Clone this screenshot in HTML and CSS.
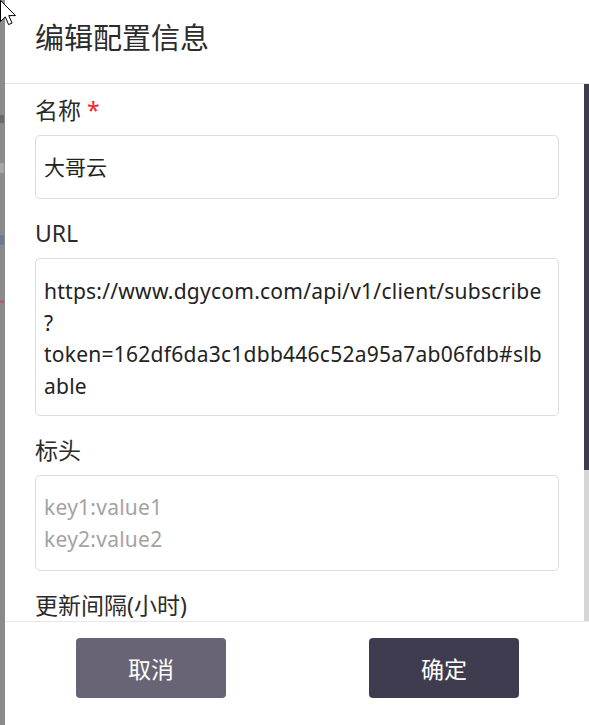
FILE: index.html
```html
<!DOCTYPE html>
<html lang="zh-CN">
<head>
<meta charset="utf-8">
<title>编辑配置信息</title>
<link rel="stylesheet" href="styles.css">
</head>
<body>
<div class="backdrop">
  <span class="bg-mark m1"></span>
  <span class="bg-mark m2"></span>
  <span class="bg-mark m3"></span>
  <span class="bg-mark m4"></span>
</div>
<div class="modal">
  <header class="modal-header">
    <h1 class="modal-title">编辑配置信息</h1>
  </header>
  <div class="modal-body">
    <div class="form">
      <div class="field">
        <label class="field-label">名称 <span class="required">*</span></label>
        <div class="input">大哥云</div>
      </div>
      <div class="field">
        <label class="field-label">URL</label>
        <div class="textarea url">https://www.dgycom.com/api/v1/client/subscribe<br>?<br>token=162df6da3c1dbb446c52a95a7ab06fdb#slb<br>able</div>
      </div>
      <div class="field">
        <label class="field-label">标头</label>
        <div class="textarea headers placeholder">key1:value1<br>key2:value2</div>
      </div>
      <div class="field">
        <label class="field-label">更新间隔(小时)</label>
      </div>
    </div>
    <div class="scrollbar"><div class="thumb"></div></div>
  </div>
  <footer class="modal-footer">
    <button class="btn btn-cancel">取消</button>
    <button class="btn btn-ok">确定</button>
  </footer>
</div>
<svg class="cursor" width="20" height="28" viewBox="0 0 20 28">
  <path d="M0.5 0.5 L0.5 21.5 L5.3 16.9 L8.6 24.6 L12 23.1 L8.8 15.6 L15.5 15.6 Z" fill="#fff" stroke="#000" stroke-width="1"/>
</svg>
</body>
</html>
```
FILE: styles.css
```css
* { box-sizing: border-box; }
html, body { margin: 0; padding: 0; }
body {
  width: 589px;
  height: 725px;
  overflow: hidden;
  display: flex;
  background: #8a8a8a;
  font-family: "Noto Sans", "Noto Sans CJK SC", sans-serif;
  color: #222;
  position: relative;
}
.backdrop {
  width: 5px;
  flex: none;
  background: #8b8b8b;
  display: flex;
  flex-direction: column;
}
.bg-mark { display: block; width: 4px; }
.m1 { height: 8px; margin-top: 115px; background: #6a6a6a; }
.m2 { height: 10px; margin-top: 40px; background: #a8a8a8; }
.m3 { height: 10px; margin-top: 62px; background: #6f7a90; }
.m4 { height: 3px; margin-top: 55px; background: #b0646a; }
.modal {
  flex: 1;
  background: #fff;
  display: flex;
  flex-direction: column;
  height: 725px;
}
.modal-header {
  height: 84px;
  flex: none;
  border-bottom: 1px solid #e5e5e5;
  padding: 18px 0 0 30px;
}
.modal-title {
  margin: 0;
  font-size: 29px;
  font-weight: 400;
  line-height: 40px;
  color: #2b2b2b;
}
.modal-body {
  flex: 1;
  display: flex;
  overflow: hidden;
  min-height: 0;
}
.form {
  flex: 1;
  padding: 11px 25px 0 30px;
  overflow: hidden;
}
.field { margin-bottom: 19px; }
.field-label {
  display: block;
  font-size: 23px;
  line-height: 30px;
  color: #2b2b2b;
  margin-bottom: 10px;
}
.required { color: #f5222d; }
.input {
  height: 64px;
  border: 1px solid #dcdcdc;
  border-radius: 5px;
  padding: 0 8px;
  font-size: 21px;
  line-height: 62px;
  color: #222;
}
.textarea {
  border: 1px solid #dcdcdc;
  border-radius: 5px;
  padding: 0 8px;
  font-size: 21px;
  letter-spacing: 0.25px;
  color: #222;
  white-space: nowrap;
  overflow: hidden;
}
.url {
  height: 158px;
  padding-top: 17px;
  line-height: 31.5px;
}
.headers {
  height: 96px;
  padding-top: 15px;
  line-height: 32px;
}
.placeholder { color: #a3a3a3; }
.scrollbar {
  width: 5px;
  flex: none;
  background: #d6d6d6;
}
.thumb {
  height: 386px;
  background: #3f3b4f;
}
.modal-footer {
  height: 104px;
  flex: none;
  border-top: 1px solid #e8e8e8;
  display: flex;
  align-items: flex-start;
  padding: 16px 0 0 71px;
  gap: 143px;
}
.btn {
  width: 150px;
  height: 60px;
  border: none;
  border-radius: 4px;
  color: #fff;
  font-family: "Noto Sans CJK SC", "Noto Sans", sans-serif;
  font-size: 23px;
  font-weight: 400;
  padding: 0;
}
.btn-cancel { background: #686475; }
.btn-ok { background: #403c4f; }
.cursor {
  position: absolute;
  left: 0;
  top: 0;
}
```
